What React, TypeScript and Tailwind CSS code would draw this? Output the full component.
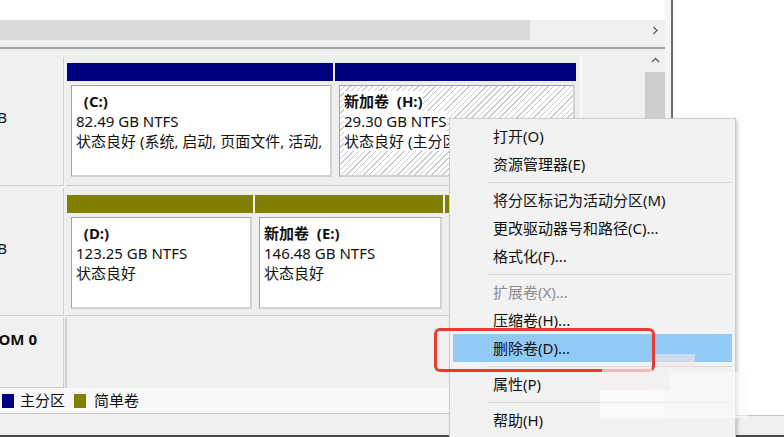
import React from 'react';

type MenuEntry = { label: string; disabled?: boolean; active?: boolean } | 'sep';

const menuItems: MenuEntry[] = [
  { label: '打开(O)' },
  { label: '资源管理器(E)' },
  'sep',
  { label: '将分区标记为活动分区(M)' },
  { label: '更改驱动器号和路径(C)...' },
  { label: '格式化(F)...' },
  'sep',
  { label: '扩展卷(X)...', disabled: true },
  { label: '压缩卷(H)...' },
  { label: '删除卷(D)...', active: true },
  'sep',
  { label: '属性(P)' },
  'sep',
  { label: '帮助(H)' },
];

function Chevron({ dir }: { dir: 'right' | 'up' }) {
  const d = dir === 'right' ? 'M2.5 1 L6 4.5 L2.5 8' : 'M1 6 L4.5 2.5 L8 6';
  return (
    <svg width="9" height="9" viewBox="0 0 9 9">
      <path d={d} fill="none" stroke="#606060" strokeWidth="1.4" />
    </svg>
  );
}

interface PartitionProps {
  width: string;
  bar: string;
  name: string;
  size: string;
  status: string;
  selected?: boolean;
}

function Partition({ width, bar, name, size, status, selected }: PartitionProps) {
  return (
    <div className={`flex shrink-0 flex-col ${width}`}>
      <div className={`h-[18px] ${bar}`} />
      <div
        className={`mt-[4px] ml-[4px] mr-[1px] h-[92px] overflow-hidden border-t border-l border-t-[#a3a3a3] border-l-[#a3a3a3] border-r-2 border-b-2 border-r-[#d2d2d2] border-b-[#d2d2d2] px-[4px] pt-[5px] text-[15px] leading-[20px] ${
          selected
            ? 'bg-[repeating-linear-gradient(135deg,#ffffff_0px,#ffffff_3px,#c9c9c9_3px,#c9c9c9_4px)]'
            : 'bg-white'
        }`}
      >
        <div className="flex">
          <span className="whitespace-pre bg-white font-bold">{name}</span>
        </div>
        <div className="flex">
          <span className="whitespace-nowrap bg-white">{size}</span>
        </div>
        <div className="flex">
          <span className="whitespace-nowrap bg-white">{status}</span>
        </div>
      </div>
    </div>
  );
}

function DiskLabel({ text, bold, top }: { text: string; bold?: boolean; top: string }) {
  return (
    <div className={`w-[64px] shrink-0 overflow-hidden border-r border-b border-[#cfcfcf] bg-[#f0f0f0] text-[15px] leading-[20px] ${top}`}>
      <div className={`w-[100px] whitespace-nowrap text-right ${bold ? '-ml-[63px] font-bold' : '-ml-[93px]'}`}>{text}</div>
    </div>
  );
}

function ContextMenu() {
  return (
    <div className="absolute left-[449px] top-[118px] h-[321px] w-[287px] border border-[#cccccc] bg-[#f2f2f2] pt-[3px] shadow-[2px_2px_3px_rgba(0,0,0,0.18)]">
      {menuItems.map((item, i) =>
        item === 'sep' ? (
          <div key={i} className="ml-[37px] mr-[3px] flex h-[8px] items-center">
            <div className="h-px w-full bg-[#d9d9d9]" />
          </div>
        ) : (
          <div
            key={i}
            className={`mx-[3px] flex h-[28px] items-center pl-[40px] text-[15px] ${
              item.active ? 'bg-[#91c9f7]' : ''
            } ${item.disabled ? 'text-[#8d8d8d]' : 'text-[#111]'}`}
          >
            {item.label}
          </div>
        ),
      )}
    </div>
  );
}

export default function App() {
  return (
    <div className="relative flex h-[437px] w-[784px] flex-col overflow-hidden bg-white font-['Noto_Sans','Noto_Sans_CJK_SC',sans-serif] text-[#111]">
      <div className="flex h-[435px]">
        {/* disk management window */}
        <div className="flex w-[665px] flex-col bg-[#f0f0f0]">
          <div className="h-[20px] bg-white" />

          {/* horizontal scrollbar of the volume list */}
          <div className="flex h-[27px] items-start bg-[#f0f0f0]">
            <div className="h-[20px] w-[530px] bg-[#dadada]" />
            <div className="flex-1" />
            <div className="flex h-[20px] w-[20px] items-center justify-center">
              <Chevron dir="right" />
            </div>
          </div>
          <div className="h-[2px] bg-[#a5a5a5]" />

          {/* graphical disk view */}
          <div className="flex h-[339px]">
            <div className="flex flex-1 flex-col gap-[2px] pt-[8px]">
              <div className="flex h-[129px]">
                <DiskLabel text="238.47 GB" top="pt-[50px]" />
                <div className="ml-[2px] flex w-[516px] gap-[2px] border-b border-r-2 border-b-[#c9c9c9] border-r-[#fbfbfb] bg-[#eeeeee] pl-[1px] pt-[6px]">
                  <Partition
                    width="w-[266px]"
                    bar="bg-[#000080]"
                    name="  (C:)"
                    size="82.49 GB NTFS"
                    status="状态良好 (系统, 启动, 页面文件, 活动,"
                  />
                  <Partition
                    width="w-[241px]"
                    bar="bg-[#000080]"
                    name="新加卷  (H:)"
                    size="29.30 GB NTFS"
                    status="状态良好 (主分区)"
                    selected
                  />
                </div>
              </div>

              <div className="flex h-[128px]">
                <DiskLabel text="931.51 GB" top="pt-[50px]" />
                <div className="ml-[2px] flex w-[516px] gap-[2px] overflow-hidden border-b border-r-2 border-b-[#c9c9c9] border-r-[#fbfbfb] bg-[#eeeeee] pl-[1px] pt-[7px]">
                  <Partition width="w-[186px]" bar="bg-[#808000]" name="  (D:)" size="123.25 GB NTFS" status="状态良好" />
                  <Partition width="w-[188px]" bar="bg-[#808000]" name="新加卷  (E:)" size="146.48 GB NTFS" status="状态良好" />
                  <Partition width="w-[135px]" bar="bg-[#808000]" name="新加卷  (G:)" size="166.01 GB NTFS" status="状态良好" />
                </div>
              </div>

              <div className="flex h-[70px]">
                <DiskLabel text="CD-ROM 0" bold top="pt-[11px]" />
                <div className="ml-[1px] flex-1 border-l-2 border-[#d0d0d0] bg-[#f0f0f0]" />
              </div>
            </div>

            {/* vertical scrollbar */}
            <div className="flex w-[20px] flex-col bg-[#f0f0f0]">
              <div className="flex h-[23px] items-center justify-center">
                <Chevron dir="up" />
              </div>
              <div className="flex-1 bg-[#cdcdcd]" />
            </div>
          </div>

          {/* legend */}
          <div className="flex h-[25px] items-center bg-[#f7f7f7] pl-[2px] text-[15px]">
            <div className="h-[14px] w-[12px] bg-[#000080]" />
            <span className="ml-[6px]">主分区</span>
            <div className="ml-[9px] h-[14px] w-[12px] bg-[#808000]" />
            <span className="ml-[8px]">简单卷</span>
          </div>
          <div className="flex-1 border-t border-[#c6c6c6] bg-[#f0f0f0]" />
        </div>

        <div className="w-[6px] bg-[#f5f5f5]" />
        <div className="w-[2px] bg-[#6b6b6b]" />

        <div className="flex flex-1 flex-col">
          <div className="flex-1 bg-white" />
          <div className="h-[20px] border-t border-[#c6c6c6] bg-[#f0f0f0]" />
        </div>
      </div>
      <div className="h-[2px] bg-[#4a4a4a]" />

      <ContextMenu />

      {/* highlight frame around the delete item */}
      <div className="absolute left-[434px] top-[328px] h-[44px] w-[221px] rounded-[6px] border-[3px] border-[#ea3a30]" />

      {/* faint mosaic patch */}
      <div className="absolute left-[655px] top-[354px] h-[14px] w-[40px] bg-[#f3e6e6]/60" />
      <div className="absolute left-[602px] top-[368px] h-[22px] w-[50px] bg-[#f8eeee]/70" />
      <div className="absolute left-[600px] top-[390px] h-[28px] w-[70px] bg-white/50" />
      <div className="absolute left-[670px] top-[372px] h-[46px] w-[78px] bg-[#fafafa]/60" />
    </div>
  );
}
